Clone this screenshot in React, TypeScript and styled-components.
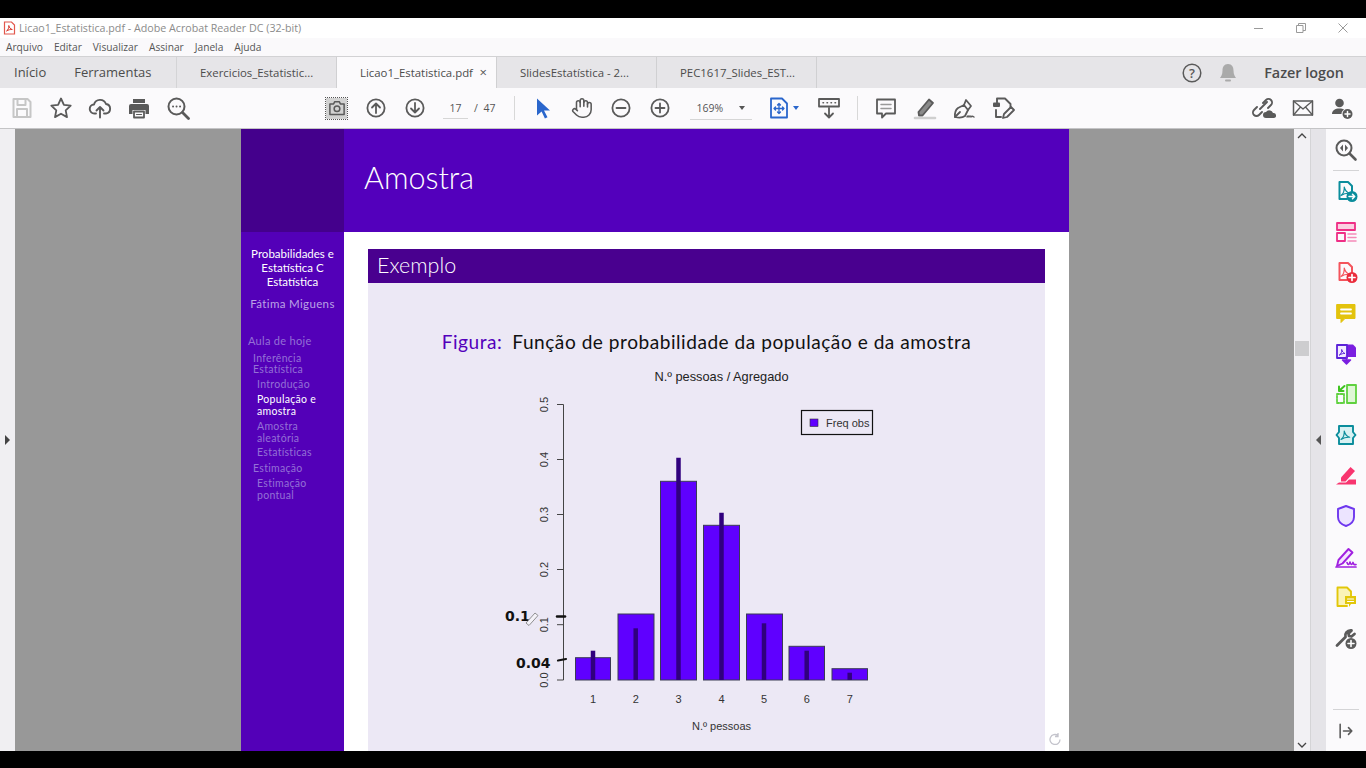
import React from "react";
import styled, { createGlobalStyle } from "styled-components";
import { Hand } from "lucide-react";

const GlobalStyle = createGlobalStyle`
  html, body { margin: 0; padding: 0; background: #000; overflow: hidden; }
  * { box-sizing: border-box; }
`;

const UI_FONT = `"Open Sans", "Noto Sans", sans-serif`;
const SLIDE_FONT = `"Lato", "Open Sans", sans-serif`;

const Screen = styled.div`
  width: 1366px;
  height: 768px;
  display: flex;
  flex-direction: column;
  background: #000;
  font-family: ${UI_FONT};
  overflow: hidden;
`;

const BlackBar = styled.div<{ $h: number }>`
  height: ${(p) => p.$h}px;
  flex: none;
  background: #000;
`;

const TitleBar = styled.div`
  height: 20px;
  flex: none;
  background: #fff;
  display: flex;
  align-items: center;
  padding-left: 3px;
  font-size: 10.7px;
  color: #8b8b8b;
  gap: 3px;
`;

const WindowControls = styled.div`
  margin-left: auto;
  display: flex;
  height: 100%;
  padding-right: 2px;
`;

const WindowButton = styled.div`
  width: 42px;
  display: flex;
  align-items: center;
  justify-content: center;
`;

const MenuBar = styled.div`
  height: 18px;
  flex: none;
  background: #faf9fb;
  display: flex;
  align-items: center;
  padding-left: 6px;
  gap: 11px;
  font-size: 10.2px;
  color: #555;
`;

const TabBar = styled.div`
  height: 32px;
  flex: none;
  background: #e6e5e8;
  border-top: 1px solid #d2d2d4;
  display: flex;
  align-items: stretch;
  color: #4c4c4c;
`;

const HomeTabs = styled.div`
  width: 177px;
  display: flex;
  align-items: center;
  padding: 0 0 2px 14px;
  gap: 28px;
  font-size: 13px;
  border-right: 1px solid #d4d4d6;
`;

const DocTab = styled.div<{ $active?: boolean }>`
  width: 160px;
  display: flex;
  align-items: center;
  justify-content: ${(p) => (p.$active ? "space-between" : "flex-start")};
  padding: 0 9px 1px 23px;
  font-size: 11.4px;
  white-space: nowrap;
  background: ${(p) => (p.$active ? "#fbfafc" : "transparent")};
  border-right: 1px solid #d0d0d2;
`;

const TabClose = styled.span`
  font-size: 13px;
  color: #555;
  line-height: 1;
`;

const TabRight = styled.div`
  margin-left: auto;
  display: flex;
  align-items: center;
`;

const LogonLabel = styled.span`
  font-size: 14.4px;
  font-weight: 600;
  margin: 0 22px 0 24px;
  color: #4c4c4c;
`;

const ToolBar = styled.div`
  height: 41px;
  flex: none;
  background: #fbfafc;
  border-bottom: 1px solid #c4c4c6;
  display: flex;
  align-items: center;
  padding-left: 2px;
`;

const ToolSlot = styled.div<{ $w?: number; $after?: number }>`
  width: ${(p) => p.$w ?? 39}px;
  height: 40px;
  flex: none;
  margin-left: ${(p) => p.$after ?? 0}px;
  display: flex;
  align-items: center;
  justify-content: center;
  color: #5a5a5a;
`;

const SelectedBox = styled.div`
  width: 21px;
  height: 21px;
  background: #d2d2d2;
  outline: 1px dotted #555;
  display: flex;
  align-items: center;
  justify-content: center;
`;

const PageField = styled.div`
  width: 25px;
  height: 22px;
  margin-left: 9px;
  border-bottom: 1px solid #d6d6d6;
  font-size: 10.5px;
  color: #555;
  display: flex;
  align-items: center;
  justify-content: center;
`;

const PageTotal = styled.span`
  margin-left: 6px;
  font-size: 10.5px;
  color: #555;
  word-spacing: 3px;
`;

const ToolSep = styled.div<{ $after: number }>`
  width: 1px;
  height: 24px;
  flex: none;
  margin-left: ${(p) => p.$after}px;
  background: #d8d8d8;
`;

const ZoomField = styled.div`
  width: 62px;
  height: 24px;
  margin-left: 10px;
  border-bottom: 1px solid #d6d6d6;
  display: flex;
  align-items: center;
  padding: 0 7px;
  justify-content: space-between;
  font-size: 10.5px;
  color: #555;
`;

const Caret = styled.span<{ $color?: string }>`
  width: 0;
  height: 0;
  border-left: 3px solid transparent;
  border-right: 3px solid transparent;
  border-top: 4px solid ${(p) => p.$color ?? "#555"};
`;

const Main = styled.div`
  height: 622px;
  flex: none;
  display: flex;
`;

const LeftRail = styled.div`
  width: 15px;
  background: #f0eff2;
  display: flex;
  align-items: center;
  justify-content: center;
`;

const Viewer = styled.div`
  width: 1279px;
  background: #989898;
  padding-left: 226px;
  overflow: hidden;
`;

const Slide = styled.div`
  width: 828px;
  height: 622px;
  display: grid;
  grid-template-columns: 103px 725px;
  grid-template-rows: 103px 519px;
  font-family: ${SLIDE_FONT};
`;

const Corner = styled.div`
  background: #44008c;
`;

const SlideHeader = styled.div`
  background: #5300bc;
  color: #fff;
  font-size: 30.5px;
  font-weight: 300;
  display: flex;
  align-items: center;
  padding: 0 0 7px 20px;
`;

const SideNav = styled.div`
  background: #5300b8;
  color: #fff;
  padding-top: 15px;
`;

const NavTitle = styled.div`
  font-size: 11.5px;
  line-height: 14px;
  text-align: center;
`;

const NavAuthor = styled.div`
  font-size: 11.5px;
  letter-spacing: 0.35px;
  line-height: 14px;
  margin-top: 8px;
  margin-bottom: 24px;
  text-align: center;
  color: #bba3e6;
`;

const NavItem = styled.div<{ $level: number; $active?: boolean; $gap?: number }>`
  font-size: ${(p) => (p.$level === 0 ? 11 : 10.5)}px;
  line-height: 11.5px;
  margin-top: ${(p) => p.$gap ?? 4}px;
  padding-left: ${(p) => 7 + p.$level * 5 - (p.$level === 2 ? 1 : 0)}px;
  letter-spacing: 0.3px;
  color: ${(p) => (p.$active ? "#fff" : "#9470d6")};
`;

const SlideBody = styled.div`
  position: relative;
  background: #fff;
  padding: 17px 24px 0;
`;

const Block = styled.div`
  height: 502px;
  background: #ece8f5;
  display: flex;
  flex-direction: column;
`;

const BlockTitle = styled.div`
  height: 34px;
  flex: none;
  background: #49008f;
  color: #fff;
  font-size: 21.5px;
  font-weight: 300;
  display: flex;
  align-items: center;
  padding: 0 0 2px 9px;
`;

const Caption = styled.div`
  height: 77px;
  flex: none;
  display: flex;
  align-items: flex-end;
  justify-content: center;
  padding-bottom: 9px;
  font-size: 19.1px;
  letter-spacing: 0.52px;
  line-height: 1;
  color: #111;
  gap: 10px;
  white-space: nowrap;
  & > span { color: #5300bc; }
`;

const ChartSvg = styled.svg`
  display: block;
  flex: none;
`;

const ReloadMark = styled.div`
  position: absolute;
  right: 7px;
  bottom: 6px;
  line-height: 0;
`;

const ScrollTrack = styled.div`
  width: 16px;
  background: #f2f1f4;
  display: flex;
  flex-direction: column;
  align-items: center;
  justify-content: space-between;
  padding: 4px 0 3px;
  position: relative;
`;

const ScrollThumb = styled.div`
  position: absolute;
  left: 1px;
  top: 212px;
  width: 14px;
  height: 15px;
  background: #cdcdcf;
`;

const SideHandle = styled.div`
  width: 16px;
  background: #e5e4e8;
  border-left: 1px solid #d4d4d6;
  display: flex;
  align-items: center;
  justify-content: center;
`;

const ToolRail = styled.div`
  width: 40px;
  background: #fbfafc;
  display: flex;
  flex-direction: column;
  align-items: center;
`;

const RailSlot = styled.div<{ $h?: number }>`
  height: ${(p) => p.$h ?? 40.6}px;
  flex: none;
  display: flex;
  align-items: center;
  justify-content: center;
`;

const RailSep = styled.div<{ $auto?: boolean }>`
  width: 26px;
  height: 1px;
  flex: none;
  background: #d4d4d6;
  margin-top: ${(p) => (p.$auto ? "auto" : "0")};
`;

const Ico = ({ children, size = 24 }: { children: React.ReactNode; size?: number }) => (
  <svg width={size} height={size} viewBox="0 0 24 24" fill="none" strokeLinecap="round" strokeLinejoin="round">
    {children}
  </svg>
);

const GREY = "#5a5a5a";

const CircleArrow = ({ up }: { up: boolean }) => (
  <Ico>
    <circle cx="12" cy="12" r="8.6" stroke={GREY} strokeWidth="1.8" />
    <path d={up ? "M12 17V7.5M8 11.5l4-4 4 4" : "M12 7v9.5M8 12.5l4 4 4-4"} stroke={GREY} strokeWidth="1.8" />
  </Ico>
);

const CircleSign = ({ plus }: { plus: boolean }) => (
  <Ico>
    <circle cx="12" cy="12" r="8.6" stroke={GREY} strokeWidth="1.8" />
    <path d={plus ? "M7.5 12h9M12 7.5v9" : "M7.5 12h9"} stroke={GREY} strokeWidth="1.8" />
  </Ico>
);

const PdfMark = ({ color }: { color: string }) => (
  <path d="M7 16.5c2.5-2 3.5-5 3.2-8.5 1 3.5 2.6 5.5 5.5 6.3-2.8-.2-5.7.3-8.7 2.2z" stroke={color} strokeWidth="1.1" />
);

const RailDoc = ({ color }: { color: string }) => (
  <path d="M13 20H5.5V3H14l4 4v5" stroke={color} strokeWidth="2" />
);

const RailIcon = ({ name }: { name: string }) => {
  switch (name) {
    case "compare":
      return (
        <Ico>
          <circle cx="10" cy="10" r="7.5" stroke={GREY} strokeWidth="2" />
          <path d="M15.5 15.5l6 6" stroke={GREY} strokeWidth="2.6" />
          <path d="M9 6.5l-3 3.5 3 3.5zM11 6.5l3 3.5-3 3.5z" fill={GREY} />
        </Ico>
      );
    case "export":
      return (
        <Ico>
          <RailDoc color="#0b8d9c" />
          <PdfMark color="#0b8d9c" />
          <circle cx="18" cy="17.5" r="5.5" fill="#0b8d9c" />
          <path d="M15 17.5h5.5M18.5 15.3l2.2 2.2-2.2 2.2" stroke="#fff" strokeWidth="1.5" />
        </Ico>
      );
    case "organize":
      return (
        <Ico>
          <rect x="3" y="3" width="18" height="7" fill="#fbd0e2" stroke="#ef2f86" strokeWidth="1.8" />
          <rect x="3" y="13" width="8" height="8" stroke="#ef2f86" strokeWidth="1.8" />
          <path d="M14 14h8M14 17.5h8M14 21h8" stroke="#f58ab8" strokeWidth="1.5" />
        </Ico>
      );
    case "create":
      return (
        <Ico>
          <RailDoc color="#f4545c" />
          <PdfMark color="#f4545c" />
          <circle cx="18" cy="17.5" r="5.5" fill="#ea2c3c" />
          <path d="M15 17.5h6M18 14.5v6" stroke="#fff" strokeWidth="1.7" />
        </Ico>
      );
    case "comment":
      return (
        <Ico>
          <path d="M3 3.5h18v14H11l-4 4v-4H3z" fill="#e3c30d" stroke="#e3c30d" strokeWidth="1" />
          <path d="M7 8.5h10M7 12.5h10" stroke="#fff" strokeWidth="1.8" />
        </Ico>
      );
    case "combine":
      return (
        <Ico>
          <path d="M10 2.5h9l3 3V15H10z" fill="#7a1fe0" />
          <path d="M3 3h10v13H3z" fill="#f3ecff" stroke="#5b22d8" strokeWidth="1.8" />
          <path d="M5.5 13c1.5-1 2.5-3 2.2-5.5.5 2 1.5 3.5 3.3 4-1.8-.1-3.5.2-5.5 1.5z" stroke="#5b22d8" strokeWidth="1" />
          <path d="M12.5 14v4M8.5 18h8l-4 4z" fill="#7a1fe0" stroke="#7a1fe0" strokeWidth="1.5" />
        </Ico>
      );
    case "compress":
      return (
        <Ico>
          <rect x="13" y="3" width="9" height="18" fill="#dff7d6" stroke="#5fd13f" strokeWidth="1.8" />
          <path d="M3 12h7v9H3z" stroke="#5fd13f" strokeWidth="1.8" strokeDasharray="2 1.5" />
          <path d="M10.5 4l-5 4.5M5 4.5V9h4.5" stroke="#3fc41f" strokeWidth="2" />
        </Ico>
      );
    case "optimize":
      return (
        <Ico>
          <path d="M5 3h14v6l2.5 3-2.5 3v6H5v-6L2.500 12 5 9z" fill="#d8f1f3" stroke="#0b8d9c" strokeWidth="1.9" />
          <PdfMark color="#0b8d9c" />
        </Ico>
      );
    case "highlight":
      return (
        <Ico>
          <path d="M7 14.5L16.5 4 21 8l-9.5 10.500H7z" fill="#f8356f" />
          <path d="M2 21.5h20v-5h-7l-3 3H5z" fill="#f8356f" />
        </Ico>
      );
    case "protect":
      return (
        <Ico>
          <path d="M12 2l8 3v8c0 4.5-3.5 7.5-8 9-4.5-1.5-8-4.5-8-9V5z" fill="#ece4ff" stroke="#6e37ee" strokeWidth="1.9" />
        </Ico>
      );
    case "fill":
      return (
        <Ico>
          <path d="M3 21l1.500-6L14.500 4l4 3.500-10 11z" fill="#f3e4ff" stroke="#a020e0" strokeWidth="1.9" />
          <path d="M2 22h20M13 17.500c1 3 2.500 2.500 3-.5.5 3 2 3 3 .5.5 2 1.500 2.500 3 2" stroke="#a020e0" strokeWidth="1.7" />
        </Ico>
      );
    case "send":
      return (
        <Ico>
          <path d="M13 21H3.5V2.500H13l4 4v5" fill="#faf3b8" stroke="#e2c70a" strokeWidth="1.9" />
          <path d="M11 11h11v8h-5l-2 3v-3h-4z" fill="#e2c70a" />
          <path d="M13.5 14h6M13.5 16.5h6" stroke="#fff" strokeWidth="1.2" />
        </Ico>
      );
    default:
      return (
        <Ico>
          <path d="M3 19.5l8.500-8.500c-1-3 1.500-7 6-6.500l-3 3 .5 2.500 2.500.5 3-2.500" stroke={GREY} strokeWidth="2.8" />
          <circle cx="17" cy="17.5" r="5.5" fill={GREY} />
          <path d="M14 17.5h6M17 14.5v6" stroke="#fff" strokeWidth="1.6" />
        </Ico>
      );
  }
};

const railNames = [
  "export",
  "organize",
  "create",
  "comment",
  "combine",
  "compress",
  "optimize",
  "highlight",
  "protect",
  "fill",
  "send",
  "tools",
];

const bars = [
  { x: 575.5, w: 35, top: 657.7, cx: 593, lineTop: 650.7 },
  { x: 618, w: 36, top: 614, cx: 635.7, lineTop: 628.3 },
  { x: 660.5, w: 36, top: 481.3, cx: 678.5, lineTop: 457.7 },
  { x: 703.5, w: 36, top: 525.3, cx: 721.5, lineTop: 512.7 },
  { x: 746.5, w: 36, top: 614, cx: 764, lineTop: 623.3 },
  { x: 789, w: 35.5, top: 646.3, cx: 806.7, lineTop: 650.7 },
  { x: 832, w: 35.5, top: 668.7, cx: 849.7, lineTop: 672.7 },
];

const yTicks = [
  { y: 680, label: "0.0" },
  { y: 624.7, label: "0.1" },
  { y: 569.5, label: "0.2" },
  { y: 514.5, label: "0.3" },
  { y: 459.5, label: "0.4" },
  { y: 404.5, label: "0.5" },
];

const CHART_FONT = "Liberation Sans, Arial, sans-serif";
const HAND_FONT = "DejaVu Sans, sans-serif";

const Chart = () => (
  <ChartSvg width="677" height="392" viewBox="368 360 677 392">
    <text x="721.5" y="381" fontSize="12.8" textAnchor="middle" fill="#222" fontFamily={CHART_FONT}>
      N.º pessoas / Agregado
    </text>
    <path d="M563.5 404.5V680" stroke="#444" fill="none" />
    {yTicks.map((t) => (
      <g key={t.label}>
        <path d={`M557 ${t.y}H563.5`} stroke="#444" />
        <text
          transform={`translate(548 ${t.y}) rotate(-90)`}
          fontSize="11"
          textAnchor="middle"
          fill="#333"
          fontFamily={CHART_FONT}
        >
          {t.label}
        </text>
      </g>
    ))}
    {bars.map((b, i) => (
      <g key={i}>
        <rect x={b.x} y={b.top} width={b.w} height={680 - b.top} fill="#5f00ff" stroke="#3b3b55" strokeWidth="1" />
        <path d={`M${b.cx} ${b.lineTop}V680`} stroke="#30007e" strokeWidth="4.5" />
        <text x={b.cx} y="703" fontSize="11" textAnchor="middle" fill="#333" fontFamily={CHART_FONT}>
          {i + 1}
        </text>
      </g>
    ))}
    <rect x="801.5" y="410.5" width="71" height="24" fill="none" stroke="#111" strokeWidth="1.2" />
    <rect x="810" y="419" width="8" height="7.5" fill="#5f00ff" stroke="#333" strokeWidth="0.6" />
    <text x="826" y="427" fontSize="11" fill="#333" fontFamily={CHART_FONT}>
      Freq obs
    </text>
    <text x="721.5" y="730" fontSize="11" textAnchor="middle" fill="#333" fontFamily={CHART_FONT}>
      N.º pessoas
    </text>
    <text x="505" y="621" fontSize="14" fontWeight="700" fill="#111" fontFamily={HAND_FONT}>
      0.1
    </text>
    <path d="M526 623l9-10 3 2.5-9 10z" fill="#f4f2f8" stroke="#777" strokeWidth="0.8" />
    <path d="M557 616.5h8" stroke="#111" strokeWidth="2.5" strokeLinecap="round" />
    <text x="516" y="668" fontSize="14" fontWeight="700" fill="#111" fontFamily={HAND_FONT}>
      0.04
    </text>
    <path d="M558 660.5l8-1.5" stroke="#111" strokeWidth="2.2" strokeLinecap="round" />
  </ChartSvg>
);

export default function App() {
  return (
    <Screen>
      <GlobalStyle />
      <BlackBar $h={18} />
      <TitleBar>
        <svg width="13" height="14" viewBox="0 0 13 14">
          <path d="M1.5 1h7l3 3v9h-10z" fill="#fff" stroke="#e2574c" strokeWidth="1.2" />
          <path d="M3.5 10c1.5-1 2.5-3 2.3-5.5.5 2.2 1.5 3.5 3.5 4-2-.1-3.8.3-5.800 1.500z" fill="none" stroke="#d83a30" strokeWidth="1" />
        </svg>
        <span>Licao1_Estatistica.pdf - Adobe Acrobat Reader DC (32-bit)</span>
        <WindowControls>
          <WindowButton>
            <svg width="10" height="10"><path d="M0 5.5h9" stroke="#9a9a9a" /></svg>
          </WindowButton>
          <WindowButton>
            <svg width="10" height="10"><path d="M.5 2.5H7v7H.5zM2.5 2.5V.5h7v7H7" stroke="#9a9a9a" fill="none" /></svg>
          </WindowButton>
          <WindowButton>
            <svg width="10" height="10"><path d="M.5.5l9 9M9.5.5l-9 9" stroke="#9a9a9a" fill="none" /></svg>
          </WindowButton>
        </WindowControls>
      </TitleBar>
      <MenuBar>
        <span>Arquivo</span>
        <span>Editar</span>
        <span>Visualizar</span>
        <span>Assinar</span>
        <span>Janela</span>
        <span>Ajuda</span>
      </MenuBar>
      <TabBar>
        <HomeTabs>
          <span>Início</span>
          <span>Ferramentas</span>
        </HomeTabs>
        <DocTab>Exercicios_Estatistic...</DocTab>
        <DocTab $active>
          <span>Licao1_Estatistica.pdf</span>
          <TabClose>×</TabClose>
        </DocTab>
        <DocTab>SlidesEstatística - 2...</DocTab>
        <DocTab>PEC1617_Slides_EST...</DocTab>
        <TabRight>
          <Ico>
            <circle cx="12" cy="12" r="8.8" stroke={GREY} strokeWidth="1.5" />
            <text x="12" y="16.5" fontSize="13" fontWeight="600" textAnchor="middle" fill={GREY} fontFamily={UI_FONT}>
              ?
            </text>
          </Ico>
          <ToolSlot $w={24} $after={12}>
            <Ico>
              <path d="M12 3c-4 0-5.5 3-5.5 6.5 0 4-1.5 6-2.5 7.5h16c-1-1.5-2.5-3.5-2.5-7.5C17.5 6 16 3 12 3z" fill="#aaa" />
              <path d="M10 19.5h4" stroke="#aaa" strokeWidth="2" />
            </Ico>
          </ToolSlot>
          <LogonLabel>Fazer logon</LogonLabel>
        </TabRight>
      </TabBar>
      <ToolBar>
        <ToolSlot>
          <Ico>
            <path d="M3.5 3h14l3 3v15h-17z M7.5 3v6h8V3 M7 21v-8h10v8" stroke="#c6c6c6" strokeWidth="2" />
          </Ico>
        </ToolSlot>
        <ToolSlot>
          <Ico>
            <path d="M12 2.5l2.9 6.3 6.8.8-5 4.7 1.3 6.8-6-3.4-6 3.4 1.3-6.8-5-4.7 6.8-.8z" stroke={GREY} strokeWidth="1.8" />
          </Ico>
        </ToolSlot>
        <ToolSlot>
          <Ico>
            <path d="M8 17.5H6.5a4.5 4.5 0 0 1-.5-9 6.3 6.3 0 0 1 12-.5 4.8 4.8 0 0 1 0 9.5h-2" stroke={GREY} strokeWidth="1.9" />
            <path d="M12 21.5V11M8.5 14.5L12 11l3.5 3.5" stroke={GREY} strokeWidth="1.9" />
          </Ico>
        </ToolSlot>
        <ToolSlot>
          <Ico>
            <path d="M6 3h12v4H6z" fill={GREY} />
            <path d="M4 8h16a2 2 0 0 1 2 2v8h-3.5v-4h-13v4H2v-8a2 2 0 0 1 2-2z" fill={GREY} />
            <path d="M7 15.5h10v6H7z" fill="none" stroke={GREY} strokeWidth="1.8" />
            <path d="M9.5 18.5h5" stroke={GREY} strokeWidth="1.2" />
          </Ico>
        </ToolSlot>
        <ToolSlot>
          <Ico>
            <circle cx="10.5" cy="10.5" r="8" stroke={GREY} strokeWidth="2" />
            <path d="M16.5 16.5l6 6" stroke={GREY} strokeWidth="2.8" />
            <path d="M7 10.5h.1M10.5 10.5h.1M14 10.5h.1" stroke={GREY} strokeWidth="1.9" />
          </Ico>
        </ToolSlot>
        <ToolSlot $after={120}>
          <SelectedBox>
            <Ico size={18}>
              <path d="M2.5 6.5h5l1.5-3h6l1.5 3h5v14h-19z" stroke={GREY} strokeWidth="2" />
              <circle cx="12" cy="13" r="3.8" stroke={GREY} strokeWidth="2" />
            </Ico>
          </SelectedBox>
        </ToolSlot>
        <ToolSlot><CircleArrow up /></ToolSlot>
        <ToolSlot><CircleArrow up={false} /></ToolSlot>
        <PageField>17</PageField>
        <PageTotal>/ 47</PageTotal>
        <ToolSep $after={18} />
        <ToolSlot $after={9}>
          <Ico>
            <path d="M6 2.5l13 12h-6l3.5 6.800-2.600 1.200-3.300-7L6 19.5z" fill="#2a66cc" />
          </Ico>
        </ToolSlot>
        <ToolSlot><Hand size={22} strokeWidth={1.7} color={GREY} /></ToolSlot>
        <ToolSlot><CircleSign plus={false} /></ToolSlot>
        <ToolSlot><CircleSign plus /></ToolSlot>
        <ZoomField>
          <span>169%</span>
          <Caret />
        </ZoomField>
        <ToolSlot $w={24} $after={15}>
          <Ico>
            <path d="M4 2.5h11l5 5v14H4z" stroke="#2a66cc" strokeWidth="1.8" />
            <path d="M12 7.5v10M7 12.5h10M10.5 9L12 7.5 13.5 9M10.5 16l1.5 1.500 1.500-1.500M8.500 11L7 12.500 8.500 14M15.500 11l1.500 1.500-1.500 1.500" stroke="#2a66cc" strokeWidth="1.3" />
          </Ico>
        </ToolSlot>
        <ToolSlot $w={8} $after={1}><Caret $color="#2a66cc" /></ToolSlot>
        <ToolSlot $after={10}>
          <Ico>
            <rect x="2" y="3" width="20" height="7.5" stroke={GREY} strokeWidth="1.8" />
            <path d="M6 6.7h.5M10 6.7h.5M14 6.7h.5M18 6.7h.5" stroke={GREY} strokeWidth="1.5" />
            <path d="M12 12v9M8 17.5l4 4 4-4" stroke={GREY} strokeWidth="1.8" />
          </Ico>
        </ToolSlot>
        <ToolSep $after={8} />
        <ToolSlot $after={9}>
          <Ico>
            <path d="M3 3.5h18v14h-9l-4 4v-4H3z" stroke={GREY} strokeWidth="1.8" />
            <path d="M7 8.5h10M7 12.5h10" stroke="#999" strokeWidth="1.5" />
          </Ico>
        </ToolSlot>
        <ToolSlot>
          <Ico>
            <path d="M5.5 16L16 3.5l4 3.5L9.5 19.5H6z" fill="#8a8a8a" stroke={GREY} strokeWidth="1.8" />
            <path d="M2 22h20" stroke="#cfcfcf" strokeWidth="2.6" />
          </Ico>
        </ToolSlot>
        <ToolSlot>
          <Ico>
            <path d="M3 21c-.5-4 .5-7 3-9l6-3 4 5-3 6c-2 1.5-6 2-10 1z" stroke={GREY} strokeWidth="1.8" />
            <path d="M12 9l2-5 5 6-3 4M3 21l5-5" stroke={GREY} strokeWidth="1.8" />
            <path d="M15 21c1-1.5 1.5-1.5 2 0 .5-1.5 1.5-1.5 2 0 .5-1 1.5-1 3 0" stroke={GREY} strokeWidth="1.4" />
          </Ico>
        </ToolSlot>
        <ToolSlot>
          <Ico>
            <rect x="2" y="6.5" width="7" height="4.5" rx="1" fill={GREY} />
            <path d="M6 6.5V2.500h8l5.500 5.500v3M5 14v7h5" stroke={GREY} strokeWidth="1.9" />
            <path d="M12 22l1-4 7-7 3 3-7 7z" stroke={GREY} strokeWidth="1.8" />
          </Ico>
        </ToolSlot>
        <ToolSlot $after={222}>
          <Ico>
            <path d="M10 16l-3 3a3.5 3.5 0 0 1-5-5l3-3 M8 13l7-7 M11 7l3-3a3.5 3.5 0 0 1 5 5l-3 3" stroke={GREY} strokeWidth="1.9" />
            <path d="M14 22a3 3 0 0 1 0-6 4 4 0 0 1 7 1 2.5 2.5 0 0 1 1 5z" fill={GREY} />
          </Ico>
        </ToolSlot>
        <ToolSlot>
          <Ico>
            <rect x="2.5" y="5" width="19" height="14" stroke={GREY} strokeWidth="1.5" />
            <path d="M2.5 5L12 13l9.5-8M2.5 19l7-8M21.5 19l-7-8" stroke={GREY} strokeWidth="1.3" />
          </Ico>
        </ToolSlot>
        <ToolSlot>
          <Ico>
            <circle cx="9.5" cy="7" r="4.3" fill={GREY} />
            <path d="M2 18c0-3.5 3-5.5 7.5-5.5 2 0 3.5.4 4.8 1.100-1.800 1-2.800 2.600-2.800 4.400z" fill={GREY} />
            <circle cx="17.5" cy="18" r="5" fill={GREY} />
            <path d="M15 18h5M17.5 15.5v5" stroke="#fff" strokeWidth="1.5" />
          </Ico>
        </ToolSlot>
      </ToolBar>
      <Main>
        <LeftRail>
          <svg width="7" height="10"><path d="M1 0l5 5-5 5z" fill="#444" /></svg>
        </LeftRail>
        <Viewer>
          <Slide>
            <Corner />
            <SlideHeader>Amostra</SlideHeader>
            <SideNav>
              <NavTitle>
                Probabilidades e
                <br />
                Estatística C
                <br />
                Estatística
              </NavTitle>
              <NavAuthor>Fátima Miguens</NavAuthor>
              <NavItem $level={0} $gap={0}>Aula de hoje</NavItem>
              <NavItem $level={1} $gap={6}>Inferência<br />Estatística</NavItem>
              <NavItem $level={2} $gap={3}>Introdução</NavItem>
              <NavItem $level={2} $active $gap={4}>População e<br />amostra</NavItem>
              <NavItem $level={2}>Amostra<br />aleatória</NavItem>
              <NavItem $level={2} $gap={3}>Estatísticas</NavItem>
              <NavItem $level={1}>Estimação</NavItem>
              <NavItem $level={2} $gap={4}>Estimação<br />pontual</NavItem>
            </SideNav>
            <SlideBody>
              <Block>
                <BlockTitle>Exemplo</BlockTitle>
                <Caption>
                  <span>Figura:</span>
                  Função de probabilidade da população e da amostra
                </Caption>
                <Chart />
              </Block>
              <ReloadMark>
                <svg width="14" height="12" viewBox="0 0 14 12">
                  <path d="M12 6.5A5 5 0 1 1 10 2.5M10 0v3.5H7" fill="none" stroke="#c4c4cc" strokeWidth="1.3" />
                </svg>
              </ReloadMark>
            </SlideBody>
          </Slide>
        </Viewer>
        <ScrollTrack>
          <svg width="10" height="6"><path d="M1 5l4-4 4 4" fill="none" stroke="#444" strokeWidth="1.3" /></svg>
          <ScrollThumb />
          <svg width="10" height="6"><path d="M1 1l4 4 4-4" fill="none" stroke="#444" strokeWidth="1.3" /></svg>
        </ScrollTrack>
        <SideHandle>
          <svg width="7" height="10"><path d="M6 0L1 5l5 5z" fill="#555" /></svg>
        </SideHandle>
        <ToolRail>
          <RailSlot $h={41}><RailIcon name="compare" /></RailSlot>
          <RailSep />
          {railNames.map((n) => (
            <RailSlot key={n}><RailIcon name={n} /></RailSlot>
          ))}
          <RailSep $auto />
          <RailSlot $h={41}>
            <Ico size={20}>
              <path d="M5 4v16M9 12h10M15 8l4 4-4 4" stroke={GREY} strokeWidth="1.9" />
            </Ico>
          </RailSlot>
        </ToolRail>
      </Main>
      <BlackBar $h={17} />
    </Screen>
  );
}
